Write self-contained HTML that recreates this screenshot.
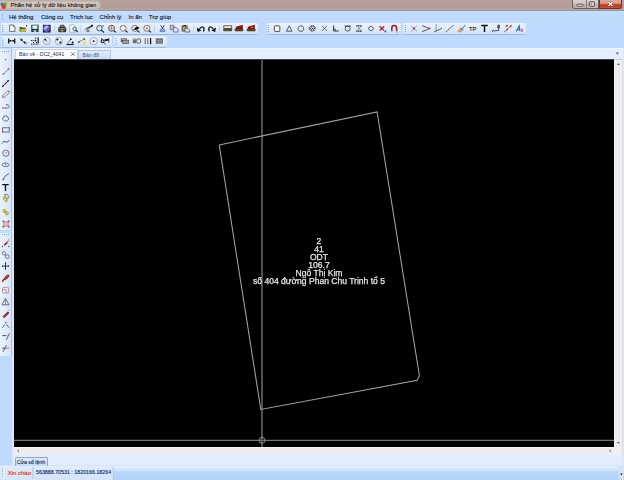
<!DOCTYPE html>
<html><head><meta charset="utf-8">
<style>
*{margin:0;padding:0;box-sizing:border-box}
html,body{width:624px;height:480px;overflow:hidden;background:#bfdafe;font-family:"Liberation Sans",sans-serif;position:relative}
.a{position:absolute}
.nw{white-space:nowrap}
#title{left:0;top:0;width:624px;height:10.5px;background:linear-gradient(#b7a19b 0,#b39d97 70%,#bca29b 82%,#b9a09a 90%,#8f97a5 96%,#8f97a5 100%);}
#title .t{left:10.5px;top:1.6px;font-size:5.85px;color:#101010;-webkit-text-stroke:0.1px #101010}
#menubar{left:0;top:10.5px;width:624px;height:12.5px;background:linear-gradient(#c5defe,#bfdbfe 30%,#bfdafd)}
.m{font-size:6px;color:#0a1530;top:3.1px;-webkit-text-stroke:0.12px #0a1530}
.tb{background:linear-gradient(#eaf3fe,#dfebfb 50%,#cfe1f8);border-bottom:1px solid #9dbbe4;border-radius:0 2px 2px 0}
#canvas{left:14px;top:59px;width:600px;height:388px;background:#000;overflow:hidden;border-top:1px solid #3a4250}
#tabs{left:13px;top:47.5px;width:611px;height:11.5px;background:#e3eefe;border-top:1px solid #f0f6fe}
#vscroll{left:614px;top:59px;width:8.5px;height:388px;background:linear-gradient(90deg,#f6f6f6,#ececec 25%,#ececec 80%,#f4f4f4);border-top:1px solid #c4d2e4;border-right:1px solid #d6dde8}
#hscroll{left:14px;top:447px;width:600px;height:8.5px;background:linear-gradient(#f6f6f6,#ececec 25%,#ececec 80%,#f2f2f2);border-bottom:1px solid #afc3de}
#corner{left:614px;top:447px;width:8.5px;height:8.5px;background:#f0f0f0;border-right:1px solid #d6dde8;border-bottom:1px solid #afc3de}
.lb{left:0;width:12px;background:linear-gradient(90deg,#e9f2fd,#dfebfb 60%,#d3e3f9);border-right:1px solid #a6c5ee}
#btab{left:13px;top:455px;width:611px;height:11px;background:#e1edfe}
#status{left:0;top:465px;width:624px;height:15px;background:linear-gradient(#d4e3f6 0,#d4e3f6 7%,#e4effd 8%,#dae8fb 30%,#d4e4fa 100%)}
.sep{width:1px;background:#b3c9e6;border-right:1px solid #f3f8fe}
</style></head><body>
<div id="title" class="a">
  <div class="a" style="left:-4px;top:1px;width:104px;height:8px;background:#d3c6c3;border-radius:4px;filter:blur(1.2px)"></div>
  <div class="a t nw">Phần hệ xử lý dữ liệu không gian</div>
  <div class="a" style="left:572px;top:0;width:27px;height:9px;background:linear-gradient(#ddd2cf,#d2c4c0 45%,#bcaca8 55%,#c6b8b4);border:1px solid #6e605c;border-top:none;border-radius:0 0 0 3px"></div>
  <div class="a" style="left:586px;top:0;width:1px;height:8px;background:#8b7670"></div>
  <div class="a" style="left:599px;top:0;width:23px;height:9px;background:linear-gradient(#dca89e,#d89888 42%,#cc4a28 55%,#c83818 80%,#d05a3c);border:1px solid #6e3428;border-top:none;border-radius:0 0 3px 0"></div>
</div>
<div id="menubar" class="a">
  <div class="a m nw" style="left:9px">Hệ thống</div>
  <div class="a m nw" style="left:41px">Công cụ</div>
  <div class="a m nw" style="left:70px">Trích lục</div>
  <div class="a m nw" style="left:99.6px">Chỉnh lý</div>
  <div class="a m nw" style="left:128.5px">In ấn</div>
  <div class="a m nw" style="left:148.8px">Trợ giúp</div>
</div>
<!-- toolbars -->
<div class="a tb" style="left:1px;top:23px;width:257px;height:12px"></div>
<div class="a tb" style="left:266.5px;top:23px;width:134px;height:12px"></div>
<div class="a tb" style="left:403px;top:23px;width:123px;height:12px"></div>
<div class="a tb" style="left:1px;top:35.5px;width:111px;height:12px"></div>
<div class="a tb" style="left:113.5px;top:35.5px;width:53px;height:12px"></div>

<div id="tabs" class="a"></div>
<div class="a lb" style="top:49px;height:181px"></div><div class="a lb" style="top:232.5px;height:123px"></div><div class="a" style="left:12px;top:48px;width:1.5px;height:418px;background:#d8e7fb"></div>
<div id="canvas" class="a">
<svg width="600" height="388" viewBox="14 59 600 388" style="position:absolute;left:0;top:-1px">
  <line x1="262" y1="59" x2="262" y2="447" stroke="#7c7c7c" stroke-width="1.3"/>
  <line x1="14" y1="440.3" x2="614" y2="440.3" stroke="#747474" stroke-width="1.3"/>
  <polyline points="219.2,144.9 377.1,111.9 419.4,375.6 417.3,380.3 260.8,409.5 219.2,144.9" fill="none" stroke="#a2a2a2" stroke-width="1.05"/>
  <circle cx="262" cy="440.3" r="3" fill="none" stroke="#8a8a8a" stroke-width="1"/>
</svg>
<div class="a nw" style="left:205px;top:176.8px;width:200px;text-align:center;color:#e6e6e6;font-size:8.55px;line-height:8.13px;-webkit-text-stroke:0.25px #e6e6e6;filter:blur(0.2px)">2<br>41<br>ODT<br>106.7<br>Ngô Thị Kim<br>số 404 đường Phan Chu Trinh tổ 5</div>
</div>
<div id="vscroll" class="a"></div>
<div id="hscroll" class="a"></div>
<div id="corner" class="a"></div>
<div id="btab" class="a"></div><div class="a" style="left:622.5px;top:48px;width:1.5px;height:417px;background:#dce8f8"></div>
<div id="status" class="a">
  <div class="a" style="left:1px;top:1.5px;width:3.5px;height:12.5px;background:#e6f0fd;border-radius:1px"></div>
  <div class="a" style="left:113px;top:1px;width:505px;height:14px;background:linear-gradient(#e5f0fd 0,#dfebfc 15%,#bad7fb 45%,#b3d2fa 100%);border-radius:0 2px 0 0"></div><div class="a" style="left:618px;top:1px;width:6px;height:14px;background:linear-gradient(#d6e6fb,#c4dbf8)"></div>
  <div class="a nw" style="left:7.7px;top:4.6px;font-size:6px;color:#f83c08;-webkit-text-stroke:0.2px #f83c08">Xin chào</div>
  <div class="a nw" style="left:36px;top:4.2px;font-size:5.3px;color:#13286a;-webkit-text-stroke:0.12px #13286a">563888.70531 : 1820166.18264</div>
</div>
<!-- tabs text -->
<div class="a" style="left:15px;top:49.3px;width:62.5px;height:10px;background:linear-gradient(#ffffff,#f6f9fe);border:1px solid #c5d6ec;border-bottom:none"></div>
<div class="a nw" style="left:19.1px;top:51.1px;font-size:5.15px;color:#2a3048">Bản vẽ - DC2_4041</div>
<div class="a" style="left:78.3px;top:49.7px;width:33px;height:9.5px;background:linear-gradient(#dfeafa,#cadcf5);border:1px solid #b3c8e6;border-bottom:none"></div>
<div class="a nw" style="left:82.6px;top:51.5px;font-size:5.2px;color:#2f5fa8">Bản đồ</div>
<div class="a" style="left:15px;top:457.2px;width:32.6px;height:9px;background:linear-gradient(#dfeafb,#c6daf6);border:1px solid #8ea9cf;border-bottom:none;border-radius:2px 2px 0 0"></div>
<div class="a nw" style="left:16.8px;top:459.4px;font-size:5.2px;color:#15244a;-webkit-text-stroke:0.1px #15244a">Cửa sổ lệnh</div>

<svg class="a" style="left:0;top:0" width="624" height="480" viewBox="0 0 624 480">
  <!-- app icon -->
  <circle cx="2.2" cy="4.3" r="1.7" fill="#2a74e0"/><circle cx="5.4" cy="4.1" r="1.8" fill="#4cbc3a"/><circle cx="3.8" cy="6.8" r="2.3" fill="#ee3a1c"/>
  <!-- window buttons glyphs -->
  <rect x="577" y="4.2" width="6" height="2" rx="0.6" fill="#f6f6f6" stroke="#3a3a3a" stroke-width="0.8"/>
  <rect x="589.4" y="1.8" width="5" height="4.4" rx="0.5" fill="#e8e8e8" stroke="#3a3a3a" stroke-width="0.9"/><path d="M590.8,3.2 L592.6,4 L590.8,4.8Z" fill="#303030"/>
  <path d="M608.5,2 L612.5,6 M612.5,2 L608.5,6" stroke="#5a2a20" stroke-width="2"/>
  <path d="M608.5,2 L612.5,6 M612.5,2 L608.5,6" stroke="#fff" stroke-width="1.2"/>
  <!-- menu gripper -->
  <g fill="#8eacd8"><rect x="2" y="13" width="1" height="1"/><rect x="2" y="15" width="1" height="1"/><rect x="2" y="17" width="1" height="1"/><rect x="2" y="19" width="1" height="1"/></g>
  <!-- toolbar grippers -->
  <g fill="#7d9fd3">
    <rect x="2.2" y="25" width="1" height="1"/><rect x="2.2" y="27" width="1" height="1"/><rect x="2.2" y="29" width="1" height="1"/><rect x="2.2" y="31" width="1" height="1"/>
    <rect x="268" y="25" width="1" height="1"/><rect x="268" y="27" width="1" height="1"/><rect x="268" y="29" width="1" height="1"/><rect x="268" y="31" width="1" height="1"/>
    <rect x="405" y="25" width="1" height="1"/><rect x="405" y="27" width="1" height="1"/><rect x="405" y="29" width="1" height="1"/><rect x="405" y="31" width="1" height="1"/>
    <rect x="2.2" y="38" width="1" height="1"/><rect x="2.2" y="40" width="1" height="1"/><rect x="2.2" y="42" width="1" height="1"/><rect x="2.2" y="44" width="1" height="1"/>
    <rect x="115.5" y="38" width="1" height="1"/><rect x="115.5" y="40" width="1" height="1"/><rect x="115.5" y="42" width="1" height="1"/><rect x="115.5" y="44" width="1" height="1"/>
    <rect x="2" y="51" width="1" height="1"/><rect x="4" y="51" width="1" height="1"/><rect x="6" y="51" width="1" height="1"/><rect x="8" y="51" width="1" height="1"/>
    <rect x="2" y="234" width="1" height="1"/><rect x="4" y="234" width="1" height="1"/><rect x="6" y="234" width="1" height="1"/><rect x="8" y="234" width="1" height="1"/>
    <rect x="2" y="468" width="1" height="1"/><rect x="2" y="470.5" width="1" height="1.2"/><rect x="2" y="473" width="1" height="1.2"/><rect x="2" y="475.5" width="1" height="1.2"/>
  </g>
  <!-- separators row1 -->
  <g fill="#b9cde8"><rect x="54.5" y="25" width="0.8" height="8"/><rect x="80.5" y="25" width="0.8" height="8"/><rect x="154" y="25" width="0.8" height="8"/><rect x="193.3" y="25" width="0.8" height="8"/><rect x="219.2" y="25" width="0.8" height="8"/></g>
  <!-- ROW1 TB1 -->
  <path d="M9.6,25 H13.2 L15,26.8 V31.4 H9.6 Z" fill="#fafafa" stroke="#505050" stroke-width="0.8"/>
  <path d="M13.2,25 V26.8 H15" fill="none" stroke="#505050" stroke-width="0.6"/>
  <path d="M19.6,27 H22 L22.6,27.6 H25.6 V31.8 H19.6 Z" fill="#6a5c14"/>
  <path d="M21,29 H27 L25.4,31.8 H19.6 Z" fill="#c8b83a"/>
  <path d="M24,27.4 Q24.8,25.2 26.4,25.6" fill="none" stroke="#f8f8f8" stroke-width="1"/>
  <path d="M26,24.8 L27.4,25.8 L26,26.8Z" fill="#202020"/>
  <rect x="31.2" y="24.8" width="7.4" height="7.2" rx="0.6" fill="#124444"/>
  <rect x="32.4" y="25.4" width="5" height="3.4" fill="#f2f2f2"/>
  <rect x="33.6" y="30" width="2.8" height="2" fill="#b8b8b8"/>
  <rect x="42.9" y="24.8" width="7.7" height="7.7" fill="#101228"/>
  <circle cx="46.7" cy="28.6" r="3.5" fill="#5a5cc0"/>
  <circle cx="45.6" cy="27.6" r="2" fill="#8a8ae0"/>
  <path d="M44.6,29.6 Q45.4,27 48.4,26.2" stroke="#f0f0ff" stroke-width="0.9" fill="none"/>
  <path d="M48.4,31.6 Q50,30.4 50.2,28.4" stroke="#202050" stroke-width="0.8" fill="none"/>
  <!-- printer -->
  <path d="M59.8,27 L60.4,25 H64 L64.6,27Z" fill="#7a7a7a" stroke="#3a3a3a" stroke-width="0.5"/>
  <path d="M58.2,28.2 Q58.2,27 59.4,27 H65 Q66.2,27 66.2,28.2 V31 Q66.2,32.2 65,32.2 H59.4 Q58.2,32.2 58.2,31Z" fill="#3e3e3e"/>
  <rect x="59" y="28" width="6.4" height="0.9" fill="#8a8a8a"/>
  <rect x="60.8" y="29.8" width="2.4" height="1.6" fill="#b8b828"/>
  <!-- preview -->
  <path d="M69.8,24.8 H73.4 L75,26.4 V32.2 H69.8Z" fill="#f6f6f6" stroke="#a0a0a0" stroke-width="0.7"/>
  <circle cx="74.6" cy="28.9" r="1.8" fill="#a0f0ff" stroke="#3a3a3a" stroke-width="0.7"/>
  <path d="M75.8,30.2 L77.8,32.2" stroke="#1a1a30" stroke-width="1.1"/>
  <!-- pan -->
  <path d="M85.2,28.4 L87.6,27 L89.4,28 L88,29.6 L90.2,31 L88.4,32.2 L86.4,31.2 L87.2,30 Z" fill="#7a7a7a"/>
  <path d="M84.6,30.2 L86,29.4 M86.2,32 L87.4,31.4" stroke="#5a5a5a" stroke-width="0.7"/>
  <path d="M88.2,27.6 L91.4,25.6 L90.4,25 L93,24.8 L92.6,27.4 L92,26.6 L89,28.6 Z" fill="#101010"/>
  <!-- zoom +- -->
  <circle cx="99.4" cy="28.2" r="2.7" fill="none" stroke="#3a3a3a" stroke-width="0.9"/>
  <path d="M101.4,30.2 L104,32.4" stroke="#10403a" stroke-width="1.3"/>
  <path d="M103,25 V27 M102,26 H104" stroke="#505050" stroke-width="0.5"/>
  <!-- zoom cross red -->
  <circle cx="111.6" cy="28.3" r="3" fill="#ececec" stroke="#505050" stroke-width="1"/>
  <path d="M111.6,25.8 V30.8 M109.2,28.3 H114" stroke="#c84048" stroke-width="0.6"/>
  <path d="M113.8,30.6 L115.8,32.4" stroke="#101010" stroke-width="1.1"/>
  <!-- zoom window -->
  <circle cx="123.2" cy="28.3" r="3" fill="#f2f2f2" stroke="#7a7a7a" stroke-width="0.9"/>
  <path d="M121,27 L121.6,26.2 M124.4,29.6 L125.2,30.2 M124.6,26.4 L125.4,27.2" stroke="#d04040" stroke-width="0.9"/>
  <path d="M125.4,30.6 L127.6,32.4" stroke="#101010" stroke-width="1.1"/>
  <!-- zoom previous -->
  <circle cx="134.8" cy="28.3" r="3" fill="#f2f2f2" stroke="#6a6a6a" stroke-width="0.9"/>
  <path d="M133,30 L136.2,26.8 L139.6,27.6 L137.4,29.6Z" fill="#101010"/>
  <path d="M137.2,30.6 L139.6,32.4" stroke="#101010" stroke-width="1.1"/>
  <!-- zoom dot -->
  <circle cx="146.8" cy="28.3" r="3" fill="#f4f4f4" stroke="#6a6a6a" stroke-width="0.9"/>
  <circle cx="146.8" cy="28.3" r="0.9" fill="#c82030"/>
  <path d="M149,30.6 L151,32.4" stroke="#101010" stroke-width="1.1"/>
  <!-- cut -->
  <path d="M160.6,25.2 L163.4,29.4 M164.4,25.2 L161.6,29.4" stroke="#202020" stroke-width="0.8"/>
  <circle cx="161.2" cy="30.6" r="1.1" fill="none" stroke="#4a50b0" stroke-width="0.9"/>
  <circle cx="163.8" cy="30.6" r="1.1" fill="none" stroke="#4a50b0" stroke-width="0.9"/>
  <!-- copy -->
  <rect x="170.2" y="25.2" width="3.8" height="4.6" fill="#bfbfbf" stroke="#6a6a6a" stroke-width="0.7"/>
  <path d="M173.4,27.6 H176.4 L178,29.2 V32 H173.4Z" fill="#e4e8f8" stroke="#4c54a8" stroke-width="0.8"/>
  <!-- paste -->
  <rect x="181.6" y="25.6" width="6" height="6" rx="0.5" fill="#5a5228"/>
  <rect x="182.6" y="26.6" width="4" height="4" fill="#b8a850"/>
  <rect x="183.4" y="25" width="2.4" height="1.2" fill="#202020"/>
  <path d="M185,28.4 H187.6 L189.6,30 V32 H185Z" fill="#dfe4f6" stroke="#4a4a98" stroke-width="0.8"/>
  <!-- undo -->
  <path d="M199.4,29.2 Q201.2,26.2 203.2,27.2 Q204.8,28.2 203.4,31.6" fill="none" stroke="#101010" stroke-width="1.2"/>
  <path d="M196.8,27.4 L197.6,32 L201.4,30.4Z" fill="#101010"/>
  <!-- redo -->
  <path d="M213.4,29.2 Q211.6,26.2 209.6,27.2 Q208,28.2 209.4,31.6" fill="none" stroke="#101010" stroke-width="1.2"/>
  <path d="M216,27.4 L215.2,32 L211.4,30.4Z" fill="#101010"/>
  <!-- A B C -->
  <rect x="223.8" y="25.8" width="8" height="2.6" fill="#f4e0ea" stroke="#2a2a2a" stroke-width="0.7"/>
  <rect x="223.5" y="29" width="8.4" height="1.8" rx="0.6" fill="#6e6210" stroke="#1a1a08" stroke-width="0.6"/>
  <path d="M235.8,26.8 L242.8,24.8 V29.2 H235.8Z" fill="#a00c0c"/>
  <rect x="235" y="29" width="8" height="1.9" rx="0.6" fill="#6e6210" stroke="#1a1a08" stroke-width="0.6"/>
  <path d="M234.6,28.4 L236,29.6" stroke="#404040" stroke-width="0.6"/>
  <path d="M247.8,26.8 L254.8,24.8 V29.2 H247.8Z" fill="#a00c0c"/>
  <path d="M250.6,27.4 L253,26.8 L252.2,28.2Z" fill="#f0e030"/>
  <rect x="247" y="29" width="8.2" height="1.9" rx="0.6" fill="#6e6210" stroke="#1a1a08" stroke-width="0.6"/>
  <!-- TB2 -->
  <rect x="274.4" y="25.8" width="5.4" height="5.6" rx="0.8" fill="#fafafa" stroke="#4a4a4a" stroke-width="1"/>
  <path d="M289.2,25.8 L292,31.2 H286.4Z" fill="none" stroke="#4a4a4a" stroke-width="0.9"/>
  <path d="M299.4,26 H302.4 L303.6,27.6 V29.6 L302.4,31.2 H299.4 L298.2,29.6 V27.6Z" fill="none" stroke="#4a4a4a" stroke-width="0.9"/>
  <path d="M310.8,25.8 H313.6 L315,27.2 V29.6 L313.6,31 H310.8 L309.4,29.6 V27.2Z" fill="#d8d8d8" stroke="#3a3a3a" stroke-width="0.7"/>
  <g fill="#202020"><rect x="311" y="26.4" width="1" height="1"/><rect x="313" y="26.4" width="1" height="1"/><rect x="310" y="27.9" width="1" height="1"/><rect x="312" y="27.9" width="1" height="1"/><rect x="314" y="27.9" width="0.8" height="1"/><rect x="311" y="29.4" width="1" height="1"/><rect x="313" y="29.4" width="1" height="1"/></g>
  <path d="M321.8,25.8 L327,31 M327,25.8 L321.8,31" stroke="#4a4a4a" stroke-width="0.8"/>
  <path d="M333.6,25.4 V31 H338.8 M333.6,28.6 Q335.4,28.6 335.8,31" fill="none" stroke="#3a3a3a" stroke-width="1"/>
  <rect x="344.5" y="25.6" width="6.4" height="0.9" fill="#2a2a2a"/>
  <circle cx="347.7" cy="28.6" r="2.5" fill="none" stroke="#4a4a4a" stroke-width="0.9"/>
  <path d="M356.4,25.8 H361.8 L359.1,28.5 L361.8,31.2 H356.4 L359.1,28.5Z" fill="none" stroke="#6a6a6a" stroke-width="0.7"/>
  <path d="M356.2,25.9 H362 M356.2,31.1 H362" stroke="#3a3a3a" stroke-width="1" stroke-dasharray="1.2,0.6"/>
  <path d="M371,26 L374,28.5 L371,31 L368,28.5Z" fill="none" stroke="#4a4a4a" stroke-width="0.9"/>
  <path d="M379.6,26.2 L384.2,30.6 M384.2,26.2 L379.6,30.6" stroke="#b01818" stroke-width="1.2"/>
  <circle cx="385.4" cy="31.4" r="0.9" fill="#505050"/>
  <path d="M391.8,30.6 V28.2 Q391.8,25.6 394.2,25.6 Q396.6,25.6 396.6,28.2 V30.6" fill="none" stroke="#a81818" stroke-width="1.5"/>
  <rect x="391" y="30.2" width="1.6" height="1.2" fill="#707070"/>
  <rect x="395.8" y="30.2" width="1.6" height="1.2" fill="#707070"/>
  <circle cx="397.2" cy="32" r="0.7" fill="#e07080"/>
  <!-- TB3 -->
  <path d="M411,25.6 L417,31.4 M417,25.6 L411,31.4" stroke="#8a8a8a" stroke-width="0.8"/>
  <circle cx="414" cy="28.5" r="1" fill="#c01020"/>
  <path d="M422,25.6 L429.4,28.4 L422,31.8" fill="none" stroke="#4a4a4a" stroke-width="0.9"/>
  <circle cx="429.6" cy="28.4" r="0.9" fill="#e02020"/>
  <rect x="435.6" y="24.5" width="1.2" height="6.6" fill="#a0a8b0"/>
  <rect x="435.6" y="24.4" width="1.2" height="1" fill="#40c8d0"/>
  <path d="M434,32 L442,28.2" stroke="#3a3a3a" stroke-width="0.8"/>
  <path d="M445.8,32 L453.6,25.2" stroke="#3a3a3a" stroke-width="0.9" stroke-dasharray="2.2,0.6"/>
  <path d="M462,29 L465.4,25" stroke="#3a80c8" stroke-width="1.1"/>
  <path d="M460.2,28 L463.2,30.4" stroke="#3a80c8" stroke-width="1.2"/>
  <path d="M459.6,28.6 L462.6,31 L460.4,32.6 L457.4,31.4Z" fill="#f09838"/>
  <text x="469" y="31.2" font-size="5.8" font-weight="bold" fill="#404448" font-family="Liberation Sans">TP</text>
  <path d="M481.2,25.6 H487.8 M484.5,25.6 V32" stroke="#151515" stroke-width="1.5"/>
  <path d="M492.2,32.2 L493.4,29.8 L494.6,31.4 L495.2,30.6 H498.6 V28.4" fill="none" stroke="#303030" stroke-width="0.8"/>
  <rect x="497.4" y="24.8" width="2.4" height="3.6" fill="#3a3a3a"/><path d="M497.8,25.8 H499.2 M497.8,27.2 H499.2" stroke="#9a9a9a" stroke-width="0.4"/>
  <path d="M504,32.2 L511.8,25" stroke="#6a6a6a" stroke-width="0.9"/>
  <path d="M505.6,26.6 L507.8,25.2" stroke="#2a2a2a" stroke-width="1.1"/>
  <circle cx="507.2" cy="29.6" r="0.85" fill="#d81818"/><circle cx="510.6" cy="26.4" r="0.85" fill="#d81818"/>
  <path d="M516.2,31.4 L519.2,25.8 L520,31.2 M517.4,29.6 H519.8" fill="none" stroke="#2f62d0" stroke-width="1.1"/>
  <path d="M521,29.2 H522.6 V31.4 H521.2 Q520.6,30.4 521.6,30.2 H522.6" fill="none" stroke="#e04848" stroke-width="0.7"/>
  <!-- ROW2 TB1 -->
  <path d="M8.7,38.4 V43.4 M14.7,38.4 V43.4" stroke="#151515" stroke-width="1.3"/>
  <path d="M8.6,40.8 H14.8" stroke="#303030" stroke-width="0.8"/>
  <circle cx="10.2" cy="40.8" r="0.9" fill="#101010"/><circle cx="13.2" cy="40.8" r="0.9" fill="#101010"/>
  <path d="M19.6,38.4 L26.6,44" stroke="#404040" stroke-width="0.7"/>
  <circle cx="21.6" cy="40" r="1" fill="#101010"/><circle cx="24.6" cy="42.6" r="1" fill="#101010"/>
  <path d="M21,37.6 L22,38.2 M26.2,43.2 L27.4,42.4" stroke="#606060" stroke-width="0.6"/>
  <g fill="#1a1a1a"><rect x="35" y="37.6" width="1.2" height="1.2"/><rect x="37.6" y="37.4" width="1.2" height="5.6"/><rect x="31" y="40" width="1" height="1"/><rect x="32.6" y="40" width="1" height="1"/><rect x="34.6" y="39.8" width="1.6" height="1.6"/><rect x="33" y="42" width="1" height="1"/><rect x="36" y="42" width="1.2" height="1"/><rect x="31" y="43.6" width="1" height="1"/><rect x="32.6" y="43.6" width="1" height="1"/><rect x="34.2" y="43.6" width="1" height="1"/><rect x="35.8" y="43.6" width="1" height="1"/><rect x="37.4" y="43.6" width="1.2" height="1"/></g>
  <circle cx="46.8" cy="41" r="3.6" fill="none" stroke="#9a9a9a" stroke-width="0.7"/>
  <circle cx="45.2" cy="39.6" r="0.9" fill="#101010"/>
  <path d="M45.2,39.6 L47.4,41.6" stroke="#202020" stroke-width="0.6"/>
  <circle cx="58.8" cy="41" r="3.6" fill="none" stroke="#9a9a9a" stroke-width="0.7"/>
  <circle cx="57.4" cy="39.6" r="1" fill="#101010"/><circle cx="60.4" cy="42.6" r="1" fill="#101010"/>
  <circle cx="70.8" cy="39.2" r="0.9" fill="#101010"/><circle cx="72.6" cy="42.6" r="1" fill="#101010"/>
  <path d="M70.8,39.2 L67.4,43.6 M66.6,44.4 H73.6" stroke="#202020" stroke-width="0.6"/>
  <path d="M66.6,44.6 H73.6" stroke="#101010" stroke-width="0.9"/>
  <path d="M78.6,42.2 L84.4,38.8" stroke="#505050" stroke-width="0.7"/>
  <circle cx="78.9" cy="42" r="0.8" fill="#181818"/><circle cx="84.3" cy="39" r="0.8" fill="#181818"/>
  <path d="M85.6,39.6 L83.6,42.4 L85,42.6 L83.2,45.6" fill="none" stroke="#e8d820" stroke-width="0.8"/>
  <circle cx="84.5" cy="43" r="1.3" fill="#f4e020"/>
  <circle cx="93.7" cy="41.2" r="3.8" fill="none" stroke="#9a9a9a" stroke-width="0.7"/>
  <circle cx="93.7" cy="41.2" r="0.9" fill="#202020"/>
  <path d="M89.6,40.4 V42" stroke="#e8e060" stroke-width="0.7"/>
  <circle cx="102.6" cy="41.2" r="1.5" fill="none" stroke="#151515" stroke-width="1.1"/>
  <path d="M103.8,42.6 L105.6,44.6" stroke="#2a6a5a" stroke-width="1"/>
  <path d="M104.2,39.6 L108.8,38.4 V40.6 L104.8,41.2 Z" fill="#151515"/>
  <path d="M108.8,38.2 V42.6" stroke="#202020" stroke-width="0.8"/>
  <rect x="101" y="38.2" width="1.2" height="1.2" fill="#202020"/>
  <!-- ROW2 TB2 -->
  <rect x="120.8" y="38.2" width="6" height="3.8" fill="#5a5a5a"/><rect x="121.4" y="38.8" width="4.8" height="0.8" fill="#e0e0e0"/>
  <rect x="122.6" y="40.2" width="6.2" height="3.4" fill="#a0a0a0" stroke="#4a4a4a" stroke-width="0.6"/>
  <rect x="132.8" y="38.6" width="3.4" height="4.6" fill="#6a6a6a"/><rect x="133.4" y="39.2" width="2" height="1" fill="#c0c0c0"/>
  <rect x="136.8" y="38.8" width="3.8" height="4.4" rx="1.2" fill="#e8e8e8" stroke="#4a4a4a" stroke-width="0.8"/>
  <path d="M145.2,38.2 V44 M147.8,38.2 V44" stroke="#505050" stroke-width="0.9"/>
  <path d="M150.6,38 V44.2" stroke="#101010" stroke-width="1.2"/>
  <rect x="155.8" y="38.4" width="7" height="5.2" fill="#5a5a5a"/>
  <path d="M156.4,40.2 H162.2 M156.4,42 H162.2" stroke="#d8d8d8" stroke-width="0.6"/>
  <!-- LEFT TOOLBAR -->
  <circle cx="5.5" cy="59.6" r="0.7" fill="#c02030"/>
  <path d="M3.5,74 L8.5,69" stroke="#707070" stroke-width="0.8"/>
  <circle cx="3.5" cy="74" r="0.8" fill="#c02030"/><circle cx="8.5" cy="69" r="0.8" fill="#c02030"/>
  <path d="M2.4,86.6 L8.6,80.4" stroke="#303030" stroke-width="0.8"/>
  <path d="M1.8,87.2 L4.4,86 L3,84.6Z M9.2,79.8 L6.6,81 L8,82.4Z" fill="#101010"/>
  <circle cx="5.5" cy="83.5" r="0.9" fill="#c02030"/>
  <path d="M2.2,96 L7.8,90.8 L9.6,92.6 L4,97.8Z" fill="#f4f4f4" stroke="#505050" stroke-width="0.6"/>
  <path d="M3.6,94.8 L5.6,96.6 M4.8,93.6 L6.8,95.4 M6,92.5 L8,94.3" stroke="#8a8a8a" stroke-width="0.4"/>
  <circle cx="3" cy="97" r="0.7" fill="#c02030"/><circle cx="8.8" cy="91.4" r="0.7" fill="#c02030"/>
  <path d="M2.5,108 H7.6 Q9.2,108 9.2,106.4 Q9.2,104.8 6.8,104.6" fill="none" stroke="#606060" stroke-width="0.8"/>
  <circle cx="2.8" cy="108" r="0.6" fill="#c02030"/><circle cx="6.6" cy="104.6" r="0.6" fill="#c02030"/><circle cx="6" cy="108" r="0.5" fill="#c02030"/>
  <path d="M2.4,119 L4,116 H7 L8.8,119 L6.8,121 H4.4Z" fill="none" stroke="#505050" stroke-width="0.8"/>
  <rect x="2.6" y="127.8" width="6.6" height="4.2" fill="none" stroke="#505050" stroke-width="0.8"/>
  <circle cx="2.6" cy="132" r="0.6" fill="#c02030"/><circle cx="9.2" cy="127.8" r="0.6" fill="#c02030"/>
  <path d="M2.2,143.6 Q4,139.8 5.6,141.8 Q7.2,143.6 9.4,140" fill="none" stroke="#303030" stroke-width="0.8"/>
  <circle cx="5.8" cy="153.2" r="3.1" fill="none" stroke="#555" stroke-width="0.8"/>
  <path d="M5.3,153.5 L6.6,152" stroke="#c02030" stroke-width="0.8"/>
  <ellipse cx="5.5" cy="164.8" rx="3.6" ry="1.8" fill="none" stroke="#606060" stroke-width="0.8"/>
  <circle cx="5.5" cy="164.8" r="0.6" fill="#c02030"/><circle cx="5.5" cy="163" r="0.5" fill="#d06070"/>
  <path d="M3.2,179.6 Q4.4,175.6 8.6,173.8" fill="none" stroke="#404040" stroke-width="0.8"/>
  <circle cx="3.2" cy="179.6" r="0.8" fill="#c02030"/><circle cx="8.8" cy="173.8" r="0.6" fill="#d06070"/>
  <path d="M2.2,184.6 H8.8 M5.5,184.6 V191" stroke="#151515" stroke-width="1.4"/>
  <path d="M4.6,194.2 L7.8,194.8 L8.6,197.8 L6,198.6Z" fill="none" stroke="#404040" stroke-width="0.6"/>
  <circle cx="4.6" cy="198" r="1.6" fill="#e0d030"/><circle cx="6.2" cy="200.4" r="1.5" fill="#e0d030"/>
  <path d="M3,197.6 L4.6,196.4 L6,198.4 L7.6,199.6 L6.4,201.8 L4.4,200.6 Z" fill="none" stroke="#606020" stroke-width="0.4"/>
  <circle cx="4.4" cy="211" r="1.6" fill="#e0d030" stroke="#606020" stroke-width="0.4"/><circle cx="6.8" cy="213.2" r="1.6" fill="#e0d030" stroke="#606020" stroke-width="0.4"/>
  <rect x="3" y="221" width="6" height="6" fill="#d49aa2"/>
  <circle cx="6" cy="224" r="1.6" fill="#ecc4cc"/><g fill="#303030"><rect x="2.6" y="220.6" width="1.2" height="1.2"/><rect x="8.2" y="220.6" width="1.2" height="1.2"/><rect x="2.6" y="226.2" width="1.2" height="1.2"/><rect x="8.2" y="226.2" width="1.2" height="1.2"/></g>
  <circle cx="2.6" cy="246.4" r="0.6" fill="#303030"/><circle cx="8.8" cy="246.4" r="0.6" fill="#303030"/>
  <path d="M4.2,245.4 L7.6,242" stroke="#9a2a9a" stroke-width="1.8"/>
  <path d="M7.2,242.4 L9.2,239.4" stroke="#c8b830" stroke-width="1.6"/>
  <circle cx="3.9" cy="253.3" r="1.7" fill="none" stroke="#505050" stroke-width="0.7"/><circle cx="7.3" cy="256.6" r="1.9" fill="none" stroke="#505050" stroke-width="0.7"/><path d="M5,254.6 L6,255.4" stroke="#505050" stroke-width="0.7"/>
  <path d="M5.5,262.6 V269.6 M2,266.1 H9" stroke="#151515" stroke-width="0.8"/>
  <path d="M5.5,262.4 L4.6,263.6 H6.4Z M5.5,269.8 L4.6,268.6 H6.4Z M1.8,266.1 L3,265.2 V267Z M9.2,266.1 L8,265.2 V267Z" fill="#151515"/>
  <path d="M2.4,280.6 Q4.6,278.4 6,276.2 Q7.6,274.4 8.8,275.6 Q8.6,277.8 5.4,279.6" fill="none" stroke="#202020" stroke-width="1"/>
  <path d="M2,281.8 L9.2,275" stroke="#e01010" stroke-width="1.1"/>
  <rect x="2.6" y="287.4" width="6" height="5.6" rx="0.8" fill="none" stroke="#b87878" stroke-width="0.8"/>
  <path d="M2.6,289.6 H6.2 V293" fill="none" stroke="#b87878" stroke-width="0.7"/>
  <path d="M5.5,298.4 L9,304.8 H2Z" fill="none" stroke="#505050" stroke-width="0.8"/>
  <path d="M5.5,298.4 V304.8" stroke="#c04050" stroke-width="0.7"/>
  <path d="M3,316.6 L7.8,311.8 L9,313 L4.2,317.8Z" fill="#c81818" stroke="#301010" stroke-width="0.5"/>
  <path d="M8.4,311 L9.6,309.6" stroke="#c08080" stroke-width="0.6"/>
  <circle cx="5.8" cy="322.6" r="0.8" fill="#e02030"/>
  <path d="M2.4,327.8 L5,324.4 M6.6,324.4 L9.2,327.8" stroke="#303030" stroke-width="0.7"/>
  <path d="M2.4,335.6 H5" stroke="#303030" stroke-width="0.9"/><path d="M5,335.6 H7.4" stroke="#c06070" stroke-width="0.9"/>
  <path d="M6.2,340 L9.6,333.2" stroke="#303030" stroke-width="0.7"/>
  <path d="M2.4,348.2 H5" stroke="#303030" stroke-width="0.9"/><path d="M5.6,348.2 H9.4" stroke="#c06070" stroke-width="0.9"/>
  <path d="M3,352 L6.6,345" stroke="#303030" stroke-width="0.7"/>
  <!-- tab close X -->
  <path d="M71,52.2 L74.6,55.8 M74.6,52.2 L71,55.8" stroke="#606060" stroke-width="0.8"/>
  <!-- tab dropdown -->
  <path d="M615.6,52.6 H619 L617.3,54.6Z" fill="#3060b0"/>
  <!-- scroll arrows -->
  <path d="M616.8,65 H620.2 L618.5,63.2Z" fill="#707070"/>
  <path d="M616.8,442 H620.2 L618.5,443.8Z" fill="#707070"/>
  <path d="M19,449.2 V452.6 L17.2,450.9Z" fill="#8a8a8a"/>
  <path d="M609.6,449.2 V452.6 L611.4,450.9Z" fill="#8a8a8a"/>
  <!-- status grip -->
  <rect x="620" y="472.6" width="2.6" height="3.6" rx="0.6" fill="#f0f4fa"/><path d="M620.3,474 H622.4 L621.35,475.6Z" fill="#101010"/><rect x="620.3" y="473" width="2.1" height="0.6" fill="#303030"/>
  <!-- status separators -->
  <rect x="32.5" y="467" width="0.8" height="12" fill="#a9c2e4"/>
  <rect x="112.8" y="467" width="0.8" height="12" fill="#a9c2e4"/>
</svg>
</body></html>
